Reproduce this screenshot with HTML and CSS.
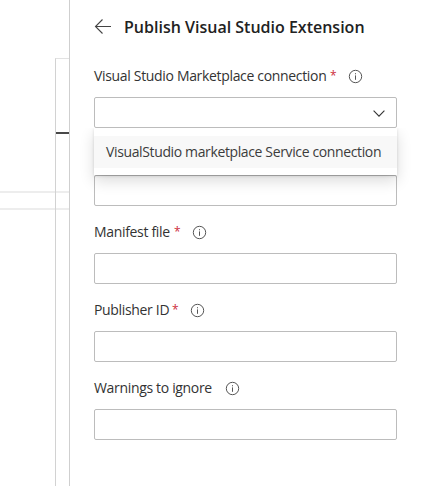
FILE: index.html
```html
<!DOCTYPE html>
<html lang="en">
<head>
<meta charset="utf-8">
<title>Publish Visual Studio Extension</title>
<link rel="stylesheet" href="styles.css">
</head>
<body>
<svg class="symbols" width="0" height="0" aria-hidden="true">
  <symbol id="info" viewBox="0 0 15 15">
    <circle cx="7.5" cy="7.5" r="6.2" fill="none" stroke="#555" stroke-width="1"/>
    <path d="M7.5 6.4v4.4M7.5 4.2v1.1" stroke="#555" stroke-width="1" fill="none"/>
  </symbol>
</svg>
<div class="app">
  <div class="canvas">
    <span class="line line-a"></span>
    <span class="line line-b"></span>
    <div class="node"></div>
    <span class="link"></span>
  </div>
  <main class="panel">
    <header class="header">
      <svg class="back" viewBox="0 0 18 16"><path d="M17 7.5H1.5M8.5 .5L1.5 7.5L8.5 14.5" fill="none" stroke="#444" stroke-width="1.1"/></svg>
      <h1 class="title">Publish Visual Studio Extension</h1>
    </header>
    <div class="field">
      <div class="label"><span class="text text-connection">Visual Studio Marketplace connection</span><span class="req">*</span><svg class="info"><use href="#info"/></svg></div>
      <div class="input select">
        <svg class="chevron" viewBox="0 0 12 7"><path d="M.6 .7L6 6.1L11.4 .7" fill="none" stroke="#333" stroke-width="1.1"/></svg>
        <div class="menu"><div class="option"><span class="option-text">VisualStudio marketplace Service connection</span></div></div>
      </div>
    </div>
    <div class="field"><div class="label"></div><div class="input"></div></div>
    <div class="field">
      <div class="label"><span class="text text-manifest">Manifest file</span><span class="req">*</span><svg class="info"><use href="#info"/></svg></div>
      <div class="input"></div>
    </div>
    <div class="field">
      <div class="label"><span class="text text-publisher">Publisher ID</span><span class="req">*</span><svg class="info"><use href="#info"/></svg></div>
      <div class="input"></div>
    </div>
    <div class="field">
      <div class="label"><span class="text text-warnings">Warnings to ignore</span><svg class="info"><use href="#info"/></svg></div>
      <div class="input"></div>
    </div>
  </main>
</div>
</body>
</html>
```
FILE: styles.css
```css
* { box-sizing: border-box; }
body { margin: 0; background: #fff; color: #333; font: 14px/20px "Open Sans", "Noto Sans", sans-serif; overflow: hidden; }
.symbols { position: absolute; }
.app { display: flex; height: 486px; }
.canvas { position: relative; width: 69px; overflow: hidden; }
.node { position: absolute; left: 55px; top: 58px; width: 20px; height: 440px; border: 1px solid #d2d2d2; border-top-color: #e2e2e2; }
.link { position: absolute; left: 56px; top: 132px; width: 13px; height: 2px; background: #484848; }
.line { position: absolute; left: 0; width: 69px; height: 2px; background: #ededed; }
.line-a { top: 191px; }
.line-b { top: 208px; }
.panel { flex: 1; border-left: 1px solid #cfcfcf; padding: 15px 31px 0 24px; }
.header { display: flex; align-items: center; height: 24px; margin-bottom: 22px; }
.back { width: 18px; height: 16px; margin-right: 12px; }
.title { margin: 0; font-size: 16px; line-height: 24px; font-weight: 600; color: #222; white-space: nowrap; }
.field { height: 78px; padding-top: 5px; }
.label { display: flex; align-items: center; height: 20px; margin-bottom: 11px; white-space: nowrap; }
.text { letter-spacing: -0.33px; }
.text-connection { width: 232px; }
.text-manifest { width: 76px; }
.text-publisher { width: 74px; }
.text-warnings { width: 125px; }
.req { width: 10px; padding-left: 4px; margin-right: 12px; color: #cd2b3a; font-size: 12px; }
.info { width: 15px; height: 15px; margin-left: 6px; margin-top: 1px; }
.req + .info { margin-left: 0; }
.input { height: 31px; border: 1px solid #bcbcbc; border-radius: 2px; background: #fff; }
.select { position: relative; display: flex; align-items: center; justify-content: flex-end; padding-right: 11px; }
.chevron { width: 12px; height: 7px; margin-top: 1px; }
.menu { position: absolute; z-index: 1; left: -1px; right: -1px; top: 30px; height: 47px; padding: 8px 0 7px; background: #fff; box-shadow: 0 6px 14px rgba(0,0,0,.14), 0 1px 3px rgba(0,0,0,.13); clip-path: inset(0 -24px -24px -24px); }
.option { height: 32px; padding: 6px 12px; background: #f8f8f8; white-space: nowrap; color: #3c3c3c; }
.option-text { letter-spacing: -0.37px; }
```
